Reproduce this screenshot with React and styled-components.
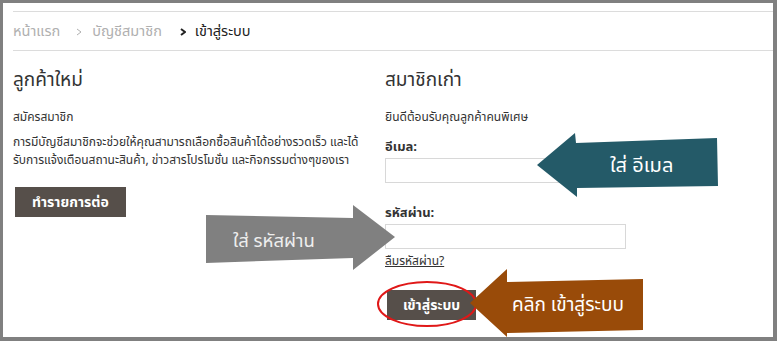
import React from 'react';
import styled, {createGlobalStyle} from 'styled-components';

const GlobalStyle = createGlobalStyle`
    html,
    body {
        margin: 0;
        padding: 0;
        background: #ffffff;
        font-family: Tahoma, 'Noto Sans Thai', 'Noto Sans', 'DejaVu Sans', sans-serif;
    }
    * {
        box-sizing: border-box;
    }
`;

const Frame = styled.div`
    position: relative;
    width: 777px;
    height: 341px;
    background: #ffffff;
    border-style: solid;
    border-color: #808080;
    border-width: 3px 4px 4px 3px;
    padding: 8px 0 0 10px;
    overflow: hidden;
`;

const Breadcrumb = styled.nav`
    display: flex;
    align-items: center;
    height: 40px;
    border-top: 1px solid #dcdcdc;
    border-bottom: 1px solid #dcdcdc;
    font-size: 14.5px;
    padding-top: 2px;
`;

const Crumb = styled.span`
    color: ${({current}) => (current ? '#222222' : '#b0b0b0')};
`;

const Chevron = styled.svg`
    margin: 0 ${({bold}) => (bold ? '9px 0 18px' : '10px 0 16px')};
`;

const Columns = styled.div`
    display: grid;
    grid-template-columns: 360px 1fr;
    column-gap: 12px;
    padding-top: 16px;
`;

const Column = styled.section`
    display: flex;
    flex-direction: column;
    align-items: flex-start;
`;

const Heading = styled.h2`
    margin: 0;
    font-size: 19px;
    font-weight: normal;
    color: #333333;
    line-height: 28px;
`;

const Small = styled.p`
    margin: 13px 0 0;
    font-size: 12px;
    line-height: 18px;
    color: #333333;
`;

const Paragraph = styled.p`
    margin: 7px 0 0;
    font-size: 12px;
    line-height: 18px;
    color: #333333;
    white-space: nowrap;
`;

const Button = styled.button`
    background: #564f4a;
    color: #ffffff;
    border: none;
    border-radius: 0;
    font-family: inherit;
    font-size: 14px;
    font-weight: bold;
    height: 30px;
    padding: 0 ${({wide}) => (wide ? 17 : 16)}px;
    margin-top: ${({gap}) => gap}px;
    margin-left: ${({shift}) => shift || 0}px;
    cursor: pointer;
`;

const Label = styled.label`
    margin-top: ${({gap}) => gap}px;
    font-size: 13px;
    font-weight: bold;
    line-height: 18px;
    color: #333333;
`;

const Input = styled.input`
    width: 241px;
    height: 25px;
    margin-top: 2px;
    border: 1px solid #d8d8d8;
    background: #ffffff;
    outline: none;
`;

const Forgot = styled.a`
    margin-top: 3px;
    font-size: 12px;
    line-height: 18px;
    color: #333333;
    text-decoration: underline;
`;

const Overlay = styled.svg`
    position: absolute;
    left: -3px;
    top: -3px;
    pointer-events: none;
`;

const NoteText = styled.text`
    font-family: Tahoma, 'Noto Sans Thai', 'Noto Sans', sans-serif;
    font-size: ${({size}) => size}px;
`;

function Annotations() {
    return (
        <Overlay width="777" height="341" viewBox="0 0 777 341">
            {/* teal arrow to email */}
            <polygon
                points="537,165 575,133 576,143 717,138 718,186 577,188 577,197"
                fill="#245a68"
            />
            <NoteText x="610" y="172" size={20} fill="#ffffff">
                ใส่ อีเมล
            </NoteText>

            {/* gray arrow to password */}
            <polygon
                points="206,215 353,218 353,205 395,237 353,270 353,258 206,263"
                fill="#808080"
            />
            <NoteText x="233" y="247" size={18.5} fill="#eeeeee">
                ใส่ รหัสผ่าน
            </NoteText>

            {/* red ring around login button */}
            <ellipse
                cx="427"
                cy="304"
                rx="49"
                ry="22"
                fill="none"
                stroke="#e01818"
                strokeWidth="2"
            />

            {/* brown arrow to login button */}
            <polygon
                points="470,303 507,269 507,282 643,279 643,330 507,333 507,337"
                fill="#994b09"
            />
            <NoteText x="512" y="311" size={19} fill="#ffffff">
                คลิก เข้าสู่ระบบ
            </NoteText>
        </Overlay>
    );
}

export default function App() {
    return (
        <>
            <GlobalStyle />
            <Frame>
                <Breadcrumb>
                    <Crumb>หน้าแรก</Crumb>
                    <Chevron width="6" height="8" viewBox="0 0 6 8">
                        <polyline points="1,1 5,4 1,7" fill="none" stroke="#b0b0b0" strokeWidth="1" />
                    </Chevron>
                    <Crumb>บัญชีสมาชิก</Crumb>
                    <Chevron bold width="6" height="8" viewBox="0 0 6 8">
                        <polyline points="1,1 5,4 1,7" fill="none" stroke="#222222" strokeWidth="2" />
                    </Chevron>
                    <Crumb current>เข้าสู่ระบบ</Crumb>
                </Breadcrumb>

                <Columns>
                    <Column>
                        <Heading>ลูกค้าใหม่</Heading>
                        <Small>สมัครสมาชิก</Small>
                        <Paragraph>
                            การมีบัญชีสมาชิกจะช่วยให้คุณสามารถเลือกซื้อสินค้าได้อย่างรวดเร็ว และได้
                            <br />
                            รับการแจ้งเตือนสถานะสินค้า, ข่าวสารโปรโมชั่น และกิจกรรมต่างๆของเรา
                        </Paragraph>
                        <Button wide gap={18} shift={2}>ทำรายการต่อ</Button>
                    </Column>

                    <Column>
                        <Heading>สมาชิกเก่า</Heading>
                        <Small>ยินดีต้อนรับคุณลูกค้าคนพิเศษ</Small>
                        <Label gap={12}>อีเมล:</Label>
                        <Input type="text" />
                        <Label gap={21}>รหัสผ่าน:</Label>
                        <Input type="password" />
                        <Forgot href="#">ลืมรหัสผ่าน?</Forgot>
                        <Button gap={20} shift={2}>เข้าสู่ระบบ</Button>
                    </Column>
                </Columns>

                <Annotations />
            </Frame>
        </>
    );
}
